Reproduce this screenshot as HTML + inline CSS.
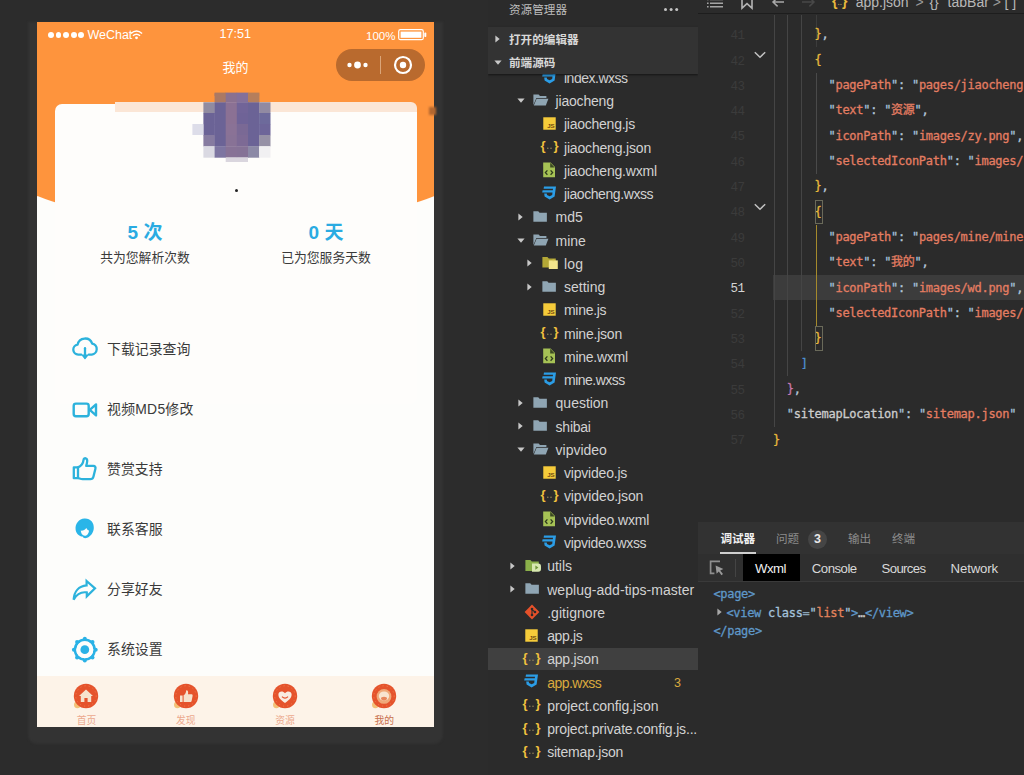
<!DOCTYPE html>
<html lang="zh-CN">
<head>
<meta charset="utf-8">
<title>WeChat DevTools</title>
<style>
*{box-sizing:border-box;margin:0;padding:0}
html,body{width:1024px;height:775px;overflow:hidden;background:#2c2c2c}
body{position:relative;font-family:"Liberation Sans","Noto Sans CJK SC",sans-serif;color:#ccc}
.abs{position:absolute}
/* ---------- simulator ---------- */
#sim{position:absolute;left:0;top:0;width:488px;height:775px;background:#2c2c2c}
#phoneshadow{position:absolute;left:27.5px;top:22px;width:415.5px;height:721.5px;background:#333;border-radius:0 0 9px 9px;filter:blur(0.8px)}
#phone{position:absolute;left:37px;top:22px;width:397px;height:705px;background:#fdfdfb;overflow:hidden;font-family:"Liberation Sans","Noto Sans CJK SC",sans-serif}
#orange{position:absolute;left:-39.5px;top:-100px;width:476px;height:302.8px;background:#fe943d;border-radius:0 0 238px 238px/0 0 64.5px 64.5px}
#card{position:absolute;left:18px;top:82px;width:362px;height:300px;background:#fefdfb;border-radius:7px}
#band{position:absolute;left:78px;top:79.6px;width:302px;border-radius:0 6px 0 0;height:10.6px;background:#fbe6d6}
.sb{position:absolute;color:#fff;font-size:12.5px;line-height:14px;white-space:nowrap}
.dot5{position:absolute;top:9.8px;width:5.9px;height:5.9px;border-radius:50%;background:#fff}
#capsule{position:absolute;left:299px;top:27px;width:89px;height:32px;border-radius:16px;background:#b96a2e}
.stat{position:absolute;width:160px;text-align:center;white-space:nowrap}
.num{color:#2aabe2;font-weight:bold;font-size:19px;line-height:24px;top:199px}
.lab{color:#3a3a3a;font-size:12.8px;line-height:16px;top:228px}
.li{position:absolute;left:70px;font-size:13.9px;line-height:18px;color:#3a3a3a;white-space:nowrap}
.ic{position:absolute;left:33px;width:28px;height:28px}
#tabbar{position:absolute;left:0;top:654px;width:397px;height:51px;background:#fdf3e8}
.tab{position:absolute;top:1px;width:99.25px;height:50px;text-align:center}
.tab span{position:absolute;left:0;width:100%;top:38.2px;font-size:9.8px;line-height:12px;color:#eda184}
.tab svg{position:absolute;left:50%;margin-left:-14.2px;top:5.4px}
/* GEN-CSS */
/* ---------- tree ---------- */
#tree{position:absolute;left:488px;top:0;width:210px;height:775px;background:#2b2b2b;overflow:hidden}
.tr{position:absolute;font-size:14px;line-height:20px;white-space:nowrap}
.th{position:absolute;font-size:11.6px;line-height:16px;font-weight:bold;color:#d8d8d8;white-space:nowrap}
/* ---------- editor ---------- */
#editor{position:absolute;left:698px;top:0;width:326px;height:775px;background:#2b2b2b;overflow:hidden}
.ln{position:absolute;left:0;width:46.4px;text-align:right;font-family:"Liberation Mono","Noto Sans CJK SC",monospace;font-size:12.5px;line-height:18px;letter-spacing:-0.55px}
.cl{position:absolute;white-space:pre;font-family:"DejaVu Sans Mono","Liberation Mono","Noto Sans CJK SC",monospace;font-size:12px;line-height:18px;letter-spacing:-0.274px;-webkit-text-stroke:0.3px}
.bc{position:absolute;font-size:14px;line-height:20px;color:#b8b8b8;white-space:nowrap}
.pt{position:absolute;top:530px;font-size:11.6px;line-height:18px;white-space:nowrap}
.dt{position:absolute;top:560px;font-size:13.2px;line-height:18px;color:#d9d9d9;white-space:nowrap;letter-spacing:-0.5px}
.wx{position:absolute;white-space:pre;font-family:"DejaVu Sans Mono","Liberation Mono","Noto Sans CJK SC",monospace;font-size:12px;line-height:18px;letter-spacing:-0.3px;-webkit-text-stroke:0.3px}
/* /GEN-CSS */</style>
</head>
<body>
<div id="sim">
  <div id="phoneshadow"></div>
  <div id="phone">
    <div id="orange"></div>
    <div id="card"></div>
    <div id="band"></div>
    <!-- status bar -->
    <div class="dot5" style="left:11px"></div><div class="dot5" style="left:18.6px"></div><div class="dot5" style="left:26.2px"></div><div class="dot5" style="left:33.8px"></div><div class="dot5" style="left:41.4px"></div>
    <div class="sb" style="left:50.4px;top:5.8px">WeChat</div>
    <svg class="abs" style="left:93.4px;top:8px" width="13" height="9.6" viewBox="0 0 14 11" preserveAspectRatio="none"><path d="M1 4 Q7 -1.5 13 4" fill="none" stroke="#fff" stroke-width="1.6"/><path d="M3.2 6.6 Q7 3 10.8 6.6" fill="none" stroke="#fff" stroke-width="1.6"/><circle cx="7" cy="9" r="1.5" fill="#fff"/></svg>
    <div class="sb" style="left:182.4px;top:5px;font-size:12.6px">17:51</div>
    <div class="sb" style="left:329px;top:7px;font-size:11.5px">100%</div>
    <svg class="abs" style="left:361px;top:7px" width="29" height="12" viewBox="0 0 29 12"><rect x="0.7" y="0.7" width="24.6" height="10" rx="1.8" fill="none" stroke="#fff" stroke-width="1.2"/><rect x="2.6" y="2.6" width="20.8" height="6.2" fill="#fff"/><rect x="26.3" y="3.6" width="2" height="4.4" rx="0.8" fill="#fff"/></svg>
    <div class="sb" style="left:0;width:397px;text-align:center;top:38px;font-size:13px;line-height:16px">我的</div>
    <div id="capsule">
      <svg width="89" height="32" viewBox="0 0 89 32"><circle cx="13.5" cy="16" r="2.2" fill="#fff"/><circle cx="21.5" cy="16" r="3.4" fill="#fff"/><circle cx="29.5" cy="16" r="2.2" fill="#fff"/><rect x="44" y="7" width="0.8" height="18" fill="#e3b48c"/><circle cx="67" cy="16" r="8" fill="none" stroke="#fff" stroke-width="2.2"/><circle cx="67" cy="16" r="3.2" fill="#fff"/></svg>
    </div>
    <!-- avatar mosaic -->
    <svg class="abs" style="left:0;top:0" width="397" height="200" viewBox="0 0 397 200"><path d="M177.6 71.2 H222.1 V74 H177.6 Z" fill="#9a7480"/><rect x="177.6" y="70.6" width="11.4" height="10.0" fill="#ab7964"/><rect x="188.7" y="70.6" width="11.4" height="10.0" fill="#8a7190"/><rect x="199.8" y="70.6" width="11.5" height="10.0" fill="#84709a"/><rect x="211.0" y="70.6" width="11.4" height="10.0" fill="#b57e5c"/><rect x="166.4" y="80.3" width="11.5" height="11.0" fill="#918ba0"/><rect x="177.6" y="80.3" width="11.4" height="11.0" fill="#6b6396"/><rect x="188.7" y="80.3" width="11.4" height="11.0" fill="#8b7194"/><rect x="199.8" y="80.3" width="11.5" height="11.0" fill="#716498"/><rect x="211.0" y="80.3" width="11.4" height="11.0" fill="#6b6396"/><rect x="222.1" y="80.3" width="11.4" height="11.0" fill="#918aa2"/><rect x="166.4" y="91.0" width="11.5" height="11.3" fill="#6b6396"/><rect x="177.6" y="91.0" width="11.4" height="11.3" fill="#6b6396"/><rect x="188.7" y="91.0" width="11.4" height="11.3" fill="#8b7194"/><rect x="199.8" y="91.0" width="11.5" height="11.3" fill="#6f6397"/><rect x="211.0" y="91.0" width="11.4" height="11.3" fill="#6b6396"/><rect x="222.1" y="91.0" width="11.4" height="11.3" fill="#6d6a9b"/><rect x="166.4" y="102.0" width="11.5" height="11.3" fill="#6b6396"/><rect x="177.6" y="102.0" width="11.4" height="11.3" fill="#6b6396"/><rect x="188.7" y="102.0" width="11.4" height="11.3" fill="#8a7296"/><rect x="199.8" y="102.0" width="11.5" height="11.3" fill="#7a6995"/><rect x="211.0" y="102.0" width="11.4" height="11.3" fill="#6b6396"/><rect x="222.1" y="102.0" width="11.4" height="11.3" fill="#6d6599"/><rect x="166.4" y="113.0" width="11.5" height="11.5" fill="#867ba0"/><rect x="177.6" y="113.0" width="11.4" height="11.5" fill="#6b6396"/><rect x="188.7" y="113.0" width="11.4" height="11.5" fill="#887296"/><rect x="199.8" y="113.0" width="11.5" height="11.5" fill="#7d6a95"/><rect x="211.0" y="113.0" width="11.4" height="11.5" fill="#6b6396"/><rect x="222.1" y="113.0" width="11.4" height="11.5" fill="#9691a6"/><rect x="166.4" y="124.2" width="11.5" height="11.5" fill="#dad9e2"/><rect x="177.6" y="124.2" width="11.4" height="11.5" fill="#7d75a1"/><rect x="188.7" y="124.2" width="11.4" height="11.5" fill="#877296"/><rect x="199.8" y="124.2" width="11.5" height="11.5" fill="#857296"/><rect x="211.0" y="124.2" width="11.4" height="11.5" fill="#8c89a6"/><rect x="222.1" y="124.2" width="11.4" height="11.5" fill="#f1f0f2"/><rect x="155.4" y="102.0" width="11" height="11" fill="#dddde9"/><rect x="188.7" y="135.4" width="22.3" height="4.6" fill="#dad6de"/></svg>
    <div class="abs" style="left:197.5px;top:166.5px;width:3px;height:3px;border-radius:50%;background:#222"></div>
    <!-- stats -->
    <div class="stat num" style="left:28px">5 次</div>
    <div class="stat lab" style="left:28px">共为您解析次数</div>
    <div class="stat num" style="left:209px">0 天</div>
    <div class="stat lab" style="left:209px">已为您服务天数</div>
    <!-- list -->
    <div class="li" style="top:318px">下载记录查询</div>
    <div class="li" style="top:378px;letter-spacing:0.25px">视频MD5修改</div>
    <div class="li" style="top:438px">赞赏支持</div>
    <div class="li" style="top:498px">联系客服</div>
    <div class="li" style="top:558px">分享好友</div>
    <div class="li" style="top:618px">系统设置</div>

    <!-- cloud download : centre (85,348.6) abs -> phone (48,326.6) -->
    <svg class="abs" style="left:33px;top:313px" width="30" height="28" viewBox="0 0 30 28"><g fill="none" stroke="#2cb2dc" stroke-width="2.3" stroke-linecap="round" stroke-linejoin="round"><path d="M11.2 19.6 H8.2 a5 5 0 0 1 -0.6 -9.95 a7.6 7.6 0 0 1 14.6 -1.1 a5.6 5.6 0 0 1 -0.4 11.05 H18.8"/><path d="M15 13.2 V22.6"/></g><path d="M10.9 19.4 L15 24.4 L19.1 19.4 Z" fill="#2cb2dc"/></svg>
    <!-- video -->
    <svg class="abs" style="left:33px;top:373.6px" width="30" height="28" viewBox="0 0 30 28"><g fill="none" stroke="#2cb2dc" stroke-width="2.4" stroke-linejoin="round"><rect x="3.7" y="7.6" width="15" height="12.6" rx="2.2"/><path d="M19.8 13.9 L26 8.4 V19.4 Z"/></g></svg>
    <!-- thumb -->
    <svg class="abs" style="left:33px;top:433px" width="30" height="28" viewBox="0 0 30 28"><g fill="none" stroke="#2cb2dc" stroke-width="2.3" stroke-linejoin="round" stroke-linecap="round"><path d="M3.8 12.4 H8 V23.2 H3.8 Z"/><path d="M8 12.4 C11.5 11 13.2 8 13.6 4.6 C13.9 2.6 17.4 2.6 17.2 6 C17.1 8 16.6 9.6 16.2 10.9 H23.4 C25.2 10.9 25.8 12.4 25.4 13.8 L23.4 21.8 C23 23.3 22 24.2 20.4 24.2 H12.6 C10.8 24.2 9.6 23.4 8 23"/></g></svg>
    <!-- service -->
    <svg class="abs" style="left:33px;top:493px" width="30" height="28" viewBox="0 0 30 28"><path d="M14.4 3.6 C20.4 3.2 24 7.8 23.8 13 C23.6 17.8 20.6 21.4 17.2 22.8 C15.2 23.6 13.4 23.4 12.6 21.6 C9.2 21 6 18.4 5.6 14.4 C5 8.6 9 4 14.4 3.6 Z" fill="#2ab5e8"/><path d="M10.8 15.6 C13 15.8 15.2 14.8 16.4 13 C17 14.4 18 15.2 19 15.4 C18.8 18.6 16.8 20.8 14.8 20.8 C12.6 20.8 11 18.4 10.8 15.6 Z" fill="#fdfdfb"/></svg>
    <!-- share -->
    <svg class="abs" style="left:33px;top:554px" width="30" height="28" viewBox="0 0 30 28"><path d="M16.6 5 L25 12.4 L16.8 20.4 L16.8 16.4 C11.4 15.6 6.8 18 3.6 23.6 C4.2 15.4 8.8 10 16.6 9.4 Z" fill="none" stroke="#2cb2dc" stroke-width="2.2" stroke-linejoin="miter"/></svg>
    <!-- gear -->
    <svg class="abs" style="left:33px;top:613px" width="30" height="30" viewBox="0 0 30 30"><g fill="#2ab2e6"><circle cx="25.70" cy="14.70" r="2"/><circle cx="22.51" cy="22.41" r="2"/><circle cx="14.80" cy="25.60" r="2"/><circle cx="7.09" cy="22.41" r="2"/><circle cx="3.90" cy="14.70" r="2"/><circle cx="7.09" cy="6.99" r="2"/><circle cx="14.80" cy="3.80" r="2"/><circle cx="22.51" cy="6.99" r="2"/></g><circle cx="14.8" cy="14.7" r="9.8" fill="none" stroke="#2ab2e6" stroke-width="2.6"/><circle cx="14.8" cy="14.7" r="8.5" fill="#fdfdfb"/><circle cx="14.8" cy="14.7" r="4.4" fill="#2ab2e6"/></svg>

    <div id="tabbar"><div class="tab" style="left:0.0px"><svg width="28" height="28" viewBox="0 0 28 28"><circle cx="5.4" cy="22.8" r="3.4" fill="#f3c178"/><circle cx="14" cy="14" r="12.2" fill="#e5532c"/><circle cx="14" cy="14" r="10.2" fill="none" stroke="#ef7a4c" stroke-width="1" stroke-dasharray="1.2 3"/><path d="M7 14 L14 7.6 L21 14 H19.2 V20 H15.6 V16 H12.4 V20 H8.8 V14 Z" fill="#f6e2cc"/></svg><span style="color:#eca98e">首页</span></div><div class="tab" style="left:99.25px"><svg width="28" height="28" viewBox="0 0 28 28"><circle cx="5.4" cy="22.8" r="3.4" fill="#f3c178"/><circle cx="14" cy="14" r="12.2" fill="#e5532c"/><circle cx="14" cy="14" r="10.2" fill="none" stroke="#ef7a4c" stroke-width="1" stroke-dasharray="1.2 3"/><path d="M8 13.4 H10.6 V20 H8 Z M11.6 13.2 C13.4 12.2 14 10.4 14.2 8.4 C15.6 8 16.6 9.2 16 12.2 H19.6 C20.6 12.2 20.8 13.2 20.6 14 L19.6 19 C19.4 19.8 19 20 18.2 20 H11.6 Z" fill="#f6e2cc"/></svg><span style="color:#eca98e">发现</span></div><div class="tab" style="left:198.5px"><svg width="28" height="28" viewBox="0 0 28 28"><circle cx="5.4" cy="22.8" r="3.4" fill="#f3c178"/><circle cx="14" cy="14" r="12.2" fill="#e5532c"/><circle cx="14" cy="14" r="10.2" fill="none" stroke="#ef7a4c" stroke-width="1" stroke-dasharray="1.2 3"/><path d="M14 21 C9 17.6 7.4 15.2 7.4 12.6 C7.4 9.4 11.6 8.2 14 11.2 C16.4 8.2 20.6 9.4 20.6 12.6 C20.6 15.2 19 17.6 14 21 Z" fill="#f9ece0"/><path d="M11 14.6 Q14 17.6 17 14.6" stroke="#e5532c" stroke-width="1.2" fill="none"/></svg><span style="color:#eca98e">资源</span></div><div class="tab" style="left:297.75px"><svg width="28" height="28" viewBox="0 0 28 28"><circle cx="5.4" cy="22.8" r="3.4" fill="#f3c178"/><circle cx="14" cy="14" r="12.2" fill="#e5532c"/><circle cx="14" cy="14" r="10.2" fill="none" stroke="#ef7a4c" stroke-width="1" stroke-dasharray="1.2 3"/><circle cx="14" cy="14.4" r="7.4" fill="#f0a878"/><ellipse cx="14" cy="14" rx="5.2" ry="4.6" fill="#f8e4d0"/><ellipse cx="14" cy="16.6" rx="3" ry="1.8" fill="#e8865c"/></svg><span style="color:#c8704c">我的</span></div></div>
  </div>
  <div id="artf" class="abs" style="left:429px;top:106.5px;width:7px;height:8px;background:#b3672f;filter:blur(0.9px)"></div>
</div>
<!-- TREE -->
<div id="tree">
<div class="abs" style="left:0;top:647.6px;width:210px;height:22px;background:#404040"></div>
<svg class="abs" style="left:53.299999999999955px;top:69.60000000000001px" width="16" height="14" viewBox="0 0 16 14"><path d="M3 0.4 H15 L13.6 10.6 L8.6 13.4 L3.6 10.6 L3.2 7.6 H5.8 L6 9 L8.6 10.2 L11.2 9 L11.5 6.6 H1.2 L1.6 4.2 H11.8 L12 2.8 H2.6 Z" fill="#2b9de6"/></svg>
<div class="tr" style="left:76.0px;top:67.80px;color:#d2d2d2;letter-spacing:-0.487px">index.wxss</div>
<svg class="abs" style="left:28.600000000000023px;top:98.26px" width="8" height="5" viewBox="0 0 8 5"><path d="M0.4 0.4 H7.6 L4 4.8 Z" fill="#c8c8c8"/></svg>
<svg class="abs" style="left:45.200000000000045px;top:93.46000000000001px" width="16" height="14" viewBox="0 0 16 14"><path d="M0.4 1.4 H5.6 L7 3 H13.4 V5 H3.4 L0.4 12 Z" fill="#8fa5b3"/><path d="M3.6 5.8 H15.4 L12.8 12.6 H0.8 Z" fill="#8fa5b3"/></svg>
<div class="tr" style="left:67.6px;top:91.06px;color:#d2d2d2;letter-spacing:-0.193px">jiaocheng</div>
<svg class="abs" style="left:54.899999999999956px;top:117.12px" width="13" height="13" viewBox="0 0 14 14"><rect x="0.3" y="0.3" width="13.4" height="13.4" fill="#f5cb3a"/><text x="12.6" y="11.6" text-anchor="end" font-family="Liberation Sans,sans-serif" font-weight="bold" font-size="6.6" fill="#6f4a12">JS</text></svg>
<div class="tr" style="left:76.0px;top:114.32px;color:#d2d2d2;letter-spacing:-0.253px">jiaocheng.js</div>
<svg class="abs" style="left:51.69999999999995px;top:138.18px" width="20" height="16" viewBox="0 0 20 16"><text x="0.4" y="12.4" font-family="Liberation Sans,sans-serif" font-weight="bold" font-size="13" fill="#f1c13e">{</text><text x="13.6" y="12.4" font-family="Liberation Sans,sans-serif" font-weight="bold" font-size="13" fill="#f1c13e">}</text><circle cx="7.8" cy="10.2" r="0.75" fill="#9a8a58"/><circle cx="11" cy="10.2" r="0.75" fill="#9a8a58"/></svg>
<div class="tr" style="left:76.0px;top:137.58px;color:#d2d2d2;letter-spacing:-0.18px">jiaocheng.json</div>
<svg class="abs" style="left:54.299999999999955px;top:162.24px" width="14" height="16" viewBox="0 0 14 16"><path d="M1.2 0.6 H8.6 L13 5 V15.2 H1.2 Z" fill="#a6c255"/><path d="M8.2 0.8 V5.4 H12.8 Z" fill="#3c4a22"/><path d="M5.4 8.4 L3.4 10.6 L5.4 12.8 M8.6 8.4 L10.6 10.6 L8.6 12.8" fill="none" stroke="#2e3a1c" stroke-width="1.3"/></svg>
<div class="tr" style="left:76.0px;top:160.84px;color:#d2d2d2;letter-spacing:-0.208px">jiaocheng.wxml</div>
<svg class="abs" style="left:53.299999999999955px;top:185.9px" width="16" height="14" viewBox="0 0 16 14"><path d="M3 0.4 H15 L13.6 10.6 L8.6 13.4 L3.6 10.6 L3.2 7.6 H5.8 L6 9 L8.6 10.2 L11.2 9 L11.5 6.6 H1.2 L1.6 4.2 H11.8 L12 2.8 H2.6 Z" fill="#2b9de6"/></svg>
<div class="tr" style="left:76.0px;top:184.10px;color:#d2d2d2;letter-spacing:-0.41px">jiaocheng.wxss</div>
<svg class="abs" style="left:30.200000000000024px;top:212.76px" width="5" height="8" viewBox="0 0 5 8"><path d="M0.4 0.4 L4.7 4 L0.4 7.6 Z" fill="#c8c8c8"/></svg>
<svg class="abs" style="left:45.200000000000045px;top:209.95999999999998px" width="15" height="13.2" viewBox="0 0 16 14"><path d="M0.4 1.4 H5.6 L7 3 H14.8 V12.6 H0.4 Z" fill="#8fa5b3"/></svg>
<div class="tr" style="left:67.6px;top:207.36px;color:#d2d2d2;letter-spacing:-0.078px">md5</div>
<svg class="abs" style="left:28.600000000000023px;top:237.82000000000005px" width="8" height="5" viewBox="0 0 8 5"><path d="M0.4 0.4 H7.6 L4 4.8 Z" fill="#c8c8c8"/></svg>
<svg class="abs" style="left:45.200000000000045px;top:233.02000000000004px" width="16" height="14" viewBox="0 0 16 14"><path d="M0.4 1.4 H5.6 L7 3 H13.4 V5 H3.4 L0.4 12 Z" fill="#8fa5b3"/><path d="M3.6 5.8 H15.4 L12.8 12.6 H0.8 Z" fill="#8fa5b3"/></svg>
<div class="tr" style="left:67.6px;top:230.62px;color:#d2d2d2;letter-spacing:-0.065px">mine</div>
<svg class="abs" style="left:38.99999999999998px;top:259.28000000000003px" width="5" height="8" viewBox="0 0 5 8"><path d="M0.4 0.4 L4.7 4 L0.4 7.6 Z" fill="#c8c8c8"/></svg>
<svg class="abs" style="left:53.799999999999955px;top:256.28000000000003px" width="17" height="14" viewBox="0 0 17 14"><path d="M0.4 1 H5.4 L6.8 2.6 H13.8 V11.6 H0.4 Z" fill="#b4a836"/><path d="M6.8 4.4 H15.8 V13 H6.8 Z" fill="#f3e58c"/><rect x="10.4" y="3.6" width="2" height="1.6" fill="#d8c860"/></svg>
<div class="tr" style="left:76.0px;top:253.88px;color:#d2d2d2;letter-spacing:0.237px">log</div>
<svg class="abs" style="left:38.99999999999998px;top:282.54px" width="5" height="8" viewBox="0 0 5 8"><path d="M0.4 0.4 L4.7 4 L0.4 7.6 Z" fill="#c8c8c8"/></svg>
<svg class="abs" style="left:53.799999999999955px;top:279.74px" width="15" height="13.2" viewBox="0 0 16 14"><path d="M0.4 1.4 H5.6 L7 3 H14.8 V12.6 H0.4 Z" fill="#8fa5b3"/></svg>
<div class="tr" style="left:76.0px;top:277.14px;color:#d2d2d2;letter-spacing:-0.007px">setting</div>
<svg class="abs" style="left:54.899999999999956px;top:303.2px" width="13" height="13" viewBox="0 0 14 14"><rect x="0.3" y="0.3" width="13.4" height="13.4" fill="#f5cb3a"/><text x="12.6" y="11.6" text-anchor="end" font-family="Liberation Sans,sans-serif" font-weight="bold" font-size="6.6" fill="#6f4a12">JS</text></svg>
<div class="tr" style="left:76.0px;top:300.40px;color:#d2d2d2;letter-spacing:-0.294px">mine.js</div>
<svg class="abs" style="left:51.69999999999995px;top:324.26px" width="20" height="16" viewBox="0 0 20 16"><text x="0.4" y="12.4" font-family="Liberation Sans,sans-serif" font-weight="bold" font-size="13" fill="#f1c13e">{</text><text x="13.6" y="12.4" font-family="Liberation Sans,sans-serif" font-weight="bold" font-size="13" fill="#f1c13e">}</text><circle cx="7.8" cy="10.2" r="0.75" fill="#9a8a58"/><circle cx="11" cy="10.2" r="0.75" fill="#9a8a58"/></svg>
<div class="tr" style="left:76.0px;top:323.66px;color:#d2d2d2;letter-spacing:-0.214px">mine.json</div>
<svg class="abs" style="left:54.299999999999955px;top:348.32px" width="14" height="16" viewBox="0 0 14 16"><path d="M1.2 0.6 H8.6 L13 5 V15.2 H1.2 Z" fill="#a6c255"/><path d="M8.2 0.8 V5.4 H12.8 Z" fill="#3c4a22"/><path d="M5.4 8.4 L3.4 10.6 L5.4 12.8 M8.6 8.4 L10.6 10.6 L8.6 12.8" fill="none" stroke="#2e3a1c" stroke-width="1.3"/></svg>
<div class="tr" style="left:76.0px;top:346.92px;color:#d2d2d2;letter-spacing:-0.247px">mine.wxml</div>
<svg class="abs" style="left:53.299999999999955px;top:371.97999999999996px" width="16" height="14" viewBox="0 0 16 14"><path d="M3 0.4 H15 L13.6 10.6 L8.6 13.4 L3.6 10.6 L3.2 7.6 H5.8 L6 9 L8.6 10.2 L11.2 9 L11.5 6.6 H1.2 L1.6 4.2 H11.8 L12 2.8 H2.6 Z" fill="#2b9de6"/></svg>
<div class="tr" style="left:76.0px;top:370.18px;color:#d2d2d2;letter-spacing:-0.507px">mine.wxss</div>
<svg class="abs" style="left:30.200000000000024px;top:398.84000000000003px" width="5" height="8" viewBox="0 0 5 8"><path d="M0.4 0.4 L4.7 4 L0.4 7.6 Z" fill="#c8c8c8"/></svg>
<svg class="abs" style="left:45.200000000000045px;top:396.04px" width="15" height="13.2" viewBox="0 0 16 14"><path d="M0.4 1.4 H5.6 L7 3 H14.8 V12.6 H0.4 Z" fill="#8fa5b3"/></svg>
<div class="tr" style="left:67.6px;top:393.44px;color:#d2d2d2;letter-spacing:-0.017px">question</div>
<svg class="abs" style="left:30.200000000000024px;top:422.1px" width="5" height="8" viewBox="0 0 5 8"><path d="M0.4 0.4 L4.7 4 L0.4 7.6 Z" fill="#c8c8c8"/></svg>
<svg class="abs" style="left:45.200000000000045px;top:419.3px" width="15" height="13.2" viewBox="0 0 16 14"><path d="M0.4 1.4 H5.6 L7 3 H14.8 V12.6 H0.4 Z" fill="#8fa5b3"/></svg>
<div class="tr" style="left:67.6px;top:416.70px;color:#d2d2d2;letter-spacing:-0.249px">shibai</div>
<svg class="abs" style="left:28.600000000000023px;top:447.16px" width="8" height="5" viewBox="0 0 8 5"><path d="M0.4 0.4 H7.6 L4 4.8 Z" fill="#c8c8c8"/></svg>
<svg class="abs" style="left:45.200000000000045px;top:442.36px" width="16" height="14" viewBox="0 0 16 14"><path d="M0.4 1.4 H5.6 L7 3 H13.4 V5 H3.4 L0.4 12 Z" fill="#8fa5b3"/><path d="M3.6 5.8 H15.4 L12.8 12.6 H0.8 Z" fill="#8fa5b3"/></svg>
<div class="tr" style="left:67.6px;top:439.96px;color:#d2d2d2;letter-spacing:-0.022px">vipvideo</div>
<svg class="abs" style="left:54.899999999999956px;top:466.02px" width="13" height="13" viewBox="0 0 14 14"><rect x="0.3" y="0.3" width="13.4" height="13.4" fill="#f5cb3a"/><text x="12.6" y="11.6" text-anchor="end" font-family="Liberation Sans,sans-serif" font-weight="bold" font-size="6.6" fill="#6f4a12">JS</text></svg>
<div class="tr" style="left:76.0px;top:463.22px;color:#d2d2d2;letter-spacing:-0.207px">vipvideo.js</div>
<svg class="abs" style="left:51.69999999999995px;top:487.08px" width="20" height="16" viewBox="0 0 20 16"><text x="0.4" y="12.4" font-family="Liberation Sans,sans-serif" font-weight="bold" font-size="13" fill="#f1c13e">{</text><text x="13.6" y="12.4" font-family="Liberation Sans,sans-serif" font-weight="bold" font-size="13" fill="#f1c13e">}</text><circle cx="7.8" cy="10.2" r="0.75" fill="#9a8a58"/><circle cx="11" cy="10.2" r="0.75" fill="#9a8a58"/></svg>
<div class="tr" style="left:76.0px;top:486.48px;color:#d2d2d2;letter-spacing:-0.134px">vipvideo.json</div>
<svg class="abs" style="left:54.299999999999955px;top:511.1400000000001px" width="14" height="16" viewBox="0 0 14 16"><path d="M1.2 0.6 H8.6 L13 5 V15.2 H1.2 Z" fill="#a6c255"/><path d="M8.2 0.8 V5.4 H12.8 Z" fill="#3c4a22"/><path d="M5.4 8.4 L3.4 10.6 L5.4 12.8 M8.6 8.4 L10.6 10.6 L8.6 12.8" fill="none" stroke="#2e3a1c" stroke-width="1.3"/></svg>
<div class="tr" style="left:76.0px;top:509.74px;color:#d2d2d2;letter-spacing:-0.142px">vipvideo.wxml</div>
<svg class="abs" style="left:53.299999999999955px;top:534.8000000000001px" width="16" height="14" viewBox="0 0 16 14"><path d="M3 0.4 H15 L13.6 10.6 L8.6 13.4 L3.6 10.6 L3.2 7.6 H5.8 L6 9 L8.6 10.2 L11.2 9 L11.5 6.6 H1.2 L1.6 4.2 H11.8 L12 2.8 H2.6 Z" fill="#2b9de6"/></svg>
<div class="tr" style="left:76.0px;top:533.00px;color:#d2d2d2;letter-spacing:-0.313px">vipvideo.wxss</div>
<svg class="abs" style="left:22.200000000000024px;top:561.6600000000001px" width="5" height="8" viewBox="0 0 5 8"><path d="M0.4 0.4 L4.7 4 L0.4 7.6 Z" fill="#c8c8c8"/></svg>
<svg class="abs" style="left:36.60000000000002px;top:558.6600000000001px" width="17" height="14" viewBox="0 0 17 14"><path d="M0.4 1 H5.4 L6.8 2.6 H13.8 V12 H0.4 Z" fill="#8bb04a"/><path d="M7 4.6 H13.2 a2.8 2.8 0 0 1 2.8 2.8 v2.6 a2.8 2.8 0 0 1 -2.8 2.8 H7 Z" fill="#d8e8b0"/><path d="M10.4 6.4 L13.4 8.6 L10.4 10.8 Z" fill="#6f9438"/></svg>
<div class="tr" style="left:59.2px;top:556.26px;color:#d2d2d2;letter-spacing:-0.001px">utils</div>
<svg class="abs" style="left:22.200000000000024px;top:584.9200000000001px" width="5" height="8" viewBox="0 0 5 8"><path d="M0.4 0.4 L4.7 4 L0.4 7.6 Z" fill="#c8c8c8"/></svg>
<svg class="abs" style="left:36.60000000000002px;top:582.1200000000001px" width="15" height="13.2" viewBox="0 0 16 14"><path d="M0.4 1.4 H5.6 L7 3 H14.8 V12.6 H0.4 Z" fill="#8fa5b3"/></svg>
<div class="tr" style="left:59.2px;top:579.52px;color:#d2d2d2;letter-spacing:0.037px">weplug-add-tips-master</div>
<svg class="abs" style="left:36.39999999999998px;top:604.1800000000001px" width="16" height="16" viewBox="0 0 16 16"><path d="M8 0.6 L15.4 8 L8 15.4 L0.6 8 Z" fill="#e6512a"/><circle cx="8" cy="5" r="1.3" fill="#2b2b2b"/><circle cx="8" cy="11" r="1.3" fill="#2b2b2b"/><circle cx="11" cy="8" r="1.3" fill="#2b2b2b"/><path d="M8 5 V11 M8 5.6 L11 8" stroke="#2b2b2b" stroke-width="1.1" fill="none"/></svg>
<div class="tr" style="left:59.2px;top:602.78px;color:#d2d2d2;letter-spacing:0.041px">.gitignore</div>
<svg class="abs" style="left:36.99999999999998px;top:628.84px" width="13" height="13" viewBox="0 0 14 14"><rect x="0.3" y="0.3" width="13.4" height="13.4" fill="#f5cb3a"/><text x="12.6" y="11.6" text-anchor="end" font-family="Liberation Sans,sans-serif" font-weight="bold" font-size="6.6" fill="#6f4a12">JS</text></svg>
<div class="tr" style="left:59.2px;top:626.04px;color:#d2d2d2;letter-spacing:-0.377px">app.js</div>
<svg class="abs" style="left:33.799999999999976px;top:649.9000000000001px" width="20" height="16" viewBox="0 0 20 16"><text x="0.4" y="12.4" font-family="Liberation Sans,sans-serif" font-weight="bold" font-size="13" fill="#f1c13e">{</text><text x="13.6" y="12.4" font-family="Liberation Sans,sans-serif" font-weight="bold" font-size="13" fill="#f1c13e">}</text><circle cx="7.8" cy="10.2" r="0.75" fill="#9a8a58"/><circle cx="11" cy="10.2" r="0.75" fill="#9a8a58"/></svg>
<div class="tr" style="left:59.2px;top:649.30px;color:#d2d2d2;letter-spacing:-0.205px">app.json</div>
<svg class="abs" style="left:35.39999999999998px;top:674.36px" width="16" height="14" viewBox="0 0 16 14"><path d="M3 0.4 H15 L13.6 10.6 L8.6 13.4 L3.6 10.6 L3.2 7.6 H5.8 L6 9 L8.6 10.2 L11.2 9 L11.5 6.6 H1.2 L1.6 4.2 H11.8 L12 2.8 H2.6 Z" fill="#2b9de6"/></svg>
<div class="tr" style="left:59.2px;top:672.56px;color:#d9a93e;letter-spacing:-0.532px">app.wxss</div>
<svg class="abs" style="left:33.799999999999976px;top:696.4200000000002px" width="20" height="16" viewBox="0 0 20 16"><text x="0.4" y="12.4" font-family="Liberation Sans,sans-serif" font-weight="bold" font-size="13" fill="#f1c13e">{</text><text x="13.6" y="12.4" font-family="Liberation Sans,sans-serif" font-weight="bold" font-size="13" fill="#f1c13e">}</text><circle cx="7.8" cy="10.2" r="0.75" fill="#9a8a58"/><circle cx="11" cy="10.2" r="0.75" fill="#9a8a58"/></svg>
<div class="tr" style="left:59.2px;top:695.82px;color:#d2d2d2;letter-spacing:-0.087px">project.config.json</div>
<svg class="abs" style="left:33.799999999999976px;top:719.6800000000002px" width="20" height="16" viewBox="0 0 20 16"><text x="0.4" y="12.4" font-family="Liberation Sans,sans-serif" font-weight="bold" font-size="13" fill="#f1c13e">{</text><text x="13.6" y="12.4" font-family="Liberation Sans,sans-serif" font-weight="bold" font-size="13" fill="#f1c13e">}</text><circle cx="7.8" cy="10.2" r="0.75" fill="#9a8a58"/><circle cx="11" cy="10.2" r="0.75" fill="#9a8a58"/></svg>
<div class="tr" style="left:59.2px;top:719.08px;color:#d2d2d2;letter-spacing:-0.177px">project.private.config.js...</div>
<svg class="abs" style="left:33.799999999999976px;top:742.9400000000002px" width="20" height="16" viewBox="0 0 20 16"><text x="0.4" y="12.4" font-family="Liberation Sans,sans-serif" font-weight="bold" font-size="13" fill="#f1c13e">{</text><text x="13.6" y="12.4" font-family="Liberation Sans,sans-serif" font-weight="bold" font-size="13" fill="#f1c13e">}</text><circle cx="7.8" cy="10.2" r="0.75" fill="#9a8a58"/><circle cx="11" cy="10.2" r="0.75" fill="#9a8a58"/></svg>
<div class="tr" style="left:59.2px;top:742.34px;color:#d2d2d2;letter-spacing:-0.216px">sitemap.json</div>
<div class="tr" style="left:186px;top:672.5px;color:#d9a93e;font-size:12.5px">3</div>
<div class="abs" style="left:0;top:0;width:210px;height:27px;background:#2b2b2b"></div>
<div class="abs" style="left:0;top:27px;width:210px;height:47px;background:#333;box-shadow:0 1px 2px rgba(0,0,0,.55)"></div>
<div class="th" style="left:21px;top:2px;color:#bdbdbd;font-weight:normal">资源管理器</div>
<div class="abs" style="left:176px;top:7.6px;width:3px;height:3px;border-radius:50%;background:#c4c4c4;box-shadow:5.6px 0 0 #c4c4c4,11.2px 0 0 #c4c4c4"></div>
<svg class="abs" style="left:7.199999999999999px;top:35.2px" width="5" height="8" viewBox="0 0 5 8"><path d="M0.4 0.4 L4.7 4 L0.4 7.6 Z" fill="#c8c8c8"/></svg>
<div class="th" style="left:21px;top:32.2px">打开的编辑器</div>
<svg class="abs" style="left:5.6px;top:59.8px" width="8" height="5" viewBox="0 0 8 5"><path d="M0.4 0.4 H7.6 L4 4.8 Z" fill="#c8c8c8"/></svg>
<div class="th" style="left:21px;top:55px">前端源码</div>
</div>
<!-- /TREE -->
<!-- EDITOR -->
<div id="editor">
<div class="abs" style="left:75px;top:274.6px;width:260px;height:25.2px;background:#3c3c3c"></div>
<div class="abs" style="left:75.6px;top:15.0px;width:1px;height:411.5px;background:#454545"></div>
<div class="abs" style="left:89.4px;top:15.0px;width:1px;height:361.0px;background:#454545"></div>
<div class="abs" style="left:103.4px;top:15.0px;width:1px;height:336.0px;background:#454545"></div>
<div class="abs" style="left:117.6px;top:15.0px;width:1px;height:32.0px;background:#3c3c3c"></div>
<div class="abs" style="left:117.6px;top:72.5px;width:1px;height:101.0px;background:#4a4a4a"></div>
<div class="abs" style="left:117.6px;top:224.5px;width:1px;height:102.0px;background:#a58a2c"></div>
<div class="ln" style="top:27.20px;color:#3b3b3b">41</div>
<div class="cl" style="left:116.60px;top:25.40px"><span style="color:#e8b93c">}</span><span style="color:#b4c8da">,</span></div>
<div class="ln" style="top:52.52px;color:#3b3b3b">42</div>
<div class="cl" style="left:116.60px;top:50.72px"><span style="color:#e8b93c">{</span></div>
<div class="ln" style="top:77.84px;color:#3b3b3b">43</div>
<div class="cl" style="left:130.50px;top:76.04px"><span style="color:#a3c0da">"</span><span style="color:#e47d62">pagePath</span><span style="color:#a3c0da">"</span><span style="color:#b4c8da">:</span> <span style="color:#a3c0da">"</span><span style="color:#e47d62">pages/jiaocheng</span></div>
<div class="ln" style="top:103.16px;color:#3b3b3b">44</div>
<div class="cl" style="left:130.50px;top:101.36px"><span style="color:#a3c0da">"</span><span style="color:#e47d62">text</span><span style="color:#a3c0da">"</span><span style="color:#b4c8da">:</span> <span style="color:#a3c0da">"</span><span style="color:#e47d62">资源</span><span style="color:#a3c0da">"</span><span style="color:#b4c8da">,</span></div>
<div class="ln" style="top:128.48px;color:#3b3b3b">45</div>
<div class="cl" style="left:130.50px;top:126.68px"><span style="color:#a3c0da">"</span><span style="color:#e47d62">iconPath</span><span style="color:#a3c0da">"</span><span style="color:#b4c8da">:</span> <span style="color:#a3c0da">"</span><span style="color:#e47d62">images/zy.png</span><span style="color:#a3c0da">"</span><span style="color:#b4c8da">,</span></div>
<div class="ln" style="top:153.80px;color:#3b3b3b">46</div>
<div class="cl" style="left:130.50px;top:152.00px"><span style="color:#a3c0da">"</span><span style="color:#e47d62">selectedIconPath</span><span style="color:#a3c0da">"</span><span style="color:#b4c8da">:</span> <span style="color:#a3c0da">"</span><span style="color:#e47d62">images/</span></div>
<div class="ln" style="top:179.12px;color:#3b3b3b">47</div>
<div class="cl" style="left:116.60px;top:177.32px"><span style="color:#e8b93c">}</span><span style="color:#b4c8da">,</span></div>
<div class="ln" style="top:204.44px;color:#3b3b3b">48</div>
<div class="cl" style="left:116.60px;top:202.64px"><span style="color:#e8b93c">{</span></div>
<div class="ln" style="top:229.76px;color:#3b3b3b">49</div>
<div class="cl" style="left:130.50px;top:227.96px"><span style="color:#a3c0da">"</span><span style="color:#e47d62">pagePath</span><span style="color:#a3c0da">"</span><span style="color:#b4c8da">:</span> <span style="color:#a3c0da">"</span><span style="color:#e47d62">pages/mine/mine</span></div>
<div class="ln" style="top:255.08px;color:#3b3b3b">50</div>
<div class="cl" style="left:130.50px;top:253.28px"><span style="color:#a3c0da">"</span><span style="color:#e47d62">text</span><span style="color:#a3c0da">"</span><span style="color:#b4c8da">:</span> <span style="color:#a3c0da">"</span><span style="color:#e47d62">我的</span><span style="color:#a3c0da">"</span><span style="color:#b4c8da">,</span></div>
<div class="ln" style="top:280.40px;color:#d4d4d4">51</div>
<div class="cl" style="left:130.50px;top:278.60px"><span style="color:#a3c0da">"</span><span style="color:#e47d62">iconPath</span><span style="color:#a3c0da">"</span><span style="color:#b4c8da">:</span> <span style="color:#a3c0da">"</span><span style="color:#e47d62">images/wd.png</span><span style="color:#a3c0da">"</span><span style="color:#b4c8da">,</span></div>
<div class="ln" style="top:305.72px;color:#3b3b3b">52</div>
<div class="cl" style="left:130.50px;top:303.92px"><span style="color:#a3c0da">"</span><span style="color:#e47d62">selectedIconPath</span><span style="color:#a3c0da">"</span><span style="color:#b4c8da">:</span> <span style="color:#a3c0da">"</span><span style="color:#e47d62">images/</span></div>
<div class="ln" style="top:331.04px;color:#3b3b3b">53</div>
<div class="cl" style="left:116.60px;top:329.24px"><span style="color:#e8b93c">}</span></div>
<div class="ln" style="top:356.36px;color:#3b3b3b">54</div>
<div class="cl" style="left:102.70px;top:354.56px"><span style="color:#4d8fd0">]</span></div>
<div class="ln" style="top:381.68px;color:#3b3b3b">55</div>
<div class="cl" style="left:88.80px;top:379.88px"><span style="color:#c878ac">}</span><span style="color:#b4c8da">,</span></div>
<div class="ln" style="top:407.00px;color:#3b3b3b">56</div>
<div class="cl" style="left:88.80px;top:405.20px"><span style="color:#a3c0da">"</span><span style="color:#cdcdcd">sitemapLocation</span><span style="color:#a3c0da">"</span><span style="color:#b4c8da">:</span> <span style="color:#a3c0da">"</span><span style="color:#e47d62">sitemap.json</span><span style="color:#a3c0da">"</span></div>
<div class="ln" style="top:432.32px;color:#3b3b3b">57</div>
<div class="cl" style="left:74.90px;top:430.52px"><span style="color:#e8b93c">}</span></div>
<div class="abs" style="left:117.2px;top:199.7px;width:7.4px;height:24.6px;border:1px solid #6a6a5a"></div>
<div class="abs" style="left:117.2px;top:326.3px;width:7.4px;height:24.6px;border:1px solid #6a6a5a"></div>
<svg class="abs" style="left:56px;top:50.8px" width="12" height="8" viewBox="0 0 12 8"><path d="M0.8 1.2 L6 6.2 L11.2 1.2" fill="none" stroke="#c2c2c2" stroke-width="1.5"/></svg>
<svg class="abs" style="left:56px;top:202.7px" width="12" height="8" viewBox="0 0 12 8"><path d="M0.8 1.2 L6 6.2 L11.2 1.2" fill="none" stroke="#c2c2c2" stroke-width="1.5"/></svg>
<div class="abs" style="left:0;top:0;width:326px;height:14px;background:#2b2b2b;border-bottom:1px solid #1d1d1d"></div>
<svg class="abs" style="left:0px;top:0" width="140" height="12" viewBox="0 0 140 12"><g stroke="#a4a4a4" stroke-width="1.5" fill="none"><path d="M12 -0.4 H25 M12 3.2 H25 M12 6.8 H25"/><path d="M9 -0.4 H10.6 M9 3.2 H10.6 M9 6.8 H10.6"/><path d="M44 -3 V8.2 L49 3.6 L54 8.2 V-3" stroke="#b4b4b4" stroke-width="1.6"/><path d="M75 2 H86 M79.6 -2.4 L75 2 L79.6 6.4" stroke="#a8a8a8"/><path d="M104 2 H116 M111.4 -2.4 L116 2 L111.4 6.4" stroke="#484848"/></g></svg>
<div class="bc" style="left:134px;top:-9px;color:#e8b93c;font-weight:bold;letter-spacing:0">{<span style="font-size:8px;color:#a08a50;position:relative;top:-1px">..</span>}</div>
<div class="bc" style="left:157.7px;top:-8.5px;color:#b8b8b8">app.json</div>
<div class="bc" style="left:217.4px;top:-8.5px;color:#9a9a9a">&gt;</div>
<div class="bc" style="left:231.4px;top:-8.5px;color:#b8b8b8">{}</div>
<div class="bc" style="left:249.6px;top:-8.5px;color:#b8b8b8">tabBar</div>
<div class="bc" style="left:294.8px;top:-8.5px;color:#9a9a9a">&gt;</div>
<div class="bc" style="left:306.6px;top:-8.5px;color:#b8b8b8">[ ]</div>
<div class="abs" style="left:0;top:522px;width:326px;height:253px;background:#2b2b2b"></div>
<div class="abs" style="left:0;top:522px;width:326px;height:31.5px;background:#323232"></div>
<div class="pt" style="left:22.4px;color:#f0f0f0;font-weight:bold">调试器</div>
<div class="abs" style="left:22px;top:552px;width:35.6px;height:1.6px;background:#cfcfcf"></div>
<div class="pt" style="left:78px;color:#8c8c8c">问题</div>
<div class="abs" style="left:110px;top:529.6px;width:19px;height:19px;border-radius:50%;background:#454545;color:#e8e8e8;font-size:12.5px;line-height:19px;text-align:center;font-weight:bold">3</div>
<div class="pt" style="left:150px;color:#8c8c8c">输出</div>
<div class="pt" style="left:194px;color:#8c8c8c">终端</div>
<div class="abs" style="left:0;top:553.5px;width:326px;height:28px;background:#2f2f2f;border-bottom:1px solid #3a3a3a"></div>
<svg class="abs" style="left:11px;top:560px" width="16" height="17" viewBox="0 0 16 17"><path d="M11 1.4 H1.6 V13.4 H5.4" fill="none" stroke="#8e8e8e" stroke-width="1.7"/><path d="M6.6 5.6 L14.4 9 L11.2 10.4 L14 14 L12.4 15.2 L9.8 11.6 L7.6 13.8 Z" fill="#9a9a9a"/></svg>
<div class="abs" style="left:37.4px;top:559px;width:1px;height:18px;background:#444"></div>
<div class="abs" style="left:44.8px;top:554px;width:57.4px;height:27px;background:#000"></div>
<div class="dt" style="left:57px;color:#f2f2f2">Wxml</div>
<div class="dt" style="left:113.8px">Console</div>
<div class="dt" style="left:183.6px;letter-spacing:-0.66px">Sources</div>
<div class="dt" style="left:252.6px;letter-spacing:-0.13px">Network</div>
<div class="wx" style="left:15.4px;top:585.4px"><span style="color:#5f98c9">&lt;page&gt;</span></div>
<svg class="abs" style="left:18.99999999999998px;top:607.6px" width="5" height="8" viewBox="0 0 5 8"><path d="M0.4 0.4 L4.7 4 L0.4 7.6 Z" fill="#a8a8a8"/></svg>
<div class="wx" style="left:28.4px;top:603.8px"><span style="color:#5f98c9">&lt;view</span> <span style="color:#a4c2dc">class</span><span style="color:#8aa4b8">=</span><span style="color:#a4c2dc">"</span><span style="color:#e2835c">list</span><span style="color:#a4c2dc">"</span><span style="color:#5f98c9">&gt;</span><span style="color:#c8c8c8">…</span><span style="color:#5f98c9">&lt;/view&gt;</span></div>
<div class="wx" style="left:15.4px;top:621.8px"><span style="color:#5f98c9">&lt;/page&gt;</span></div>
</div>
<!-- /EDITOR -->
</body>
</html>
